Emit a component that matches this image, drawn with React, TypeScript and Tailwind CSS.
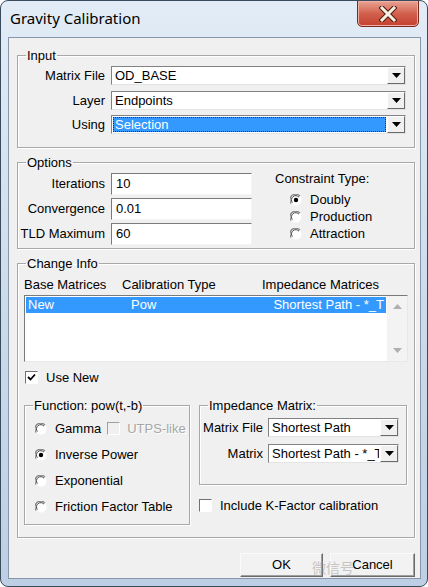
import React from "react";

const font = "font-['Liberation_Sans',Arial,sans-serif]";

function Arrow() {
  return (
    <svg width="9" height="5" viewBox="0 0 9 5">
      <path d="M0 0H9L4.5 5Z" fill="#000" />
    </svg>
  );
}

function DropButton() {
  return (
    <div className="flex w-[18px] shrink-0 items-center justify-center border border-t-white border-l-white border-r-[#696969] border-b-[#696969] bg-[#f0f0f0]">
      <Arrow />
    </div>
  );
}

function Combo({ value, w, selected }: { value: string; w: string; selected?: boolean }) {
  return (
    <div className={`flex h-[19px] ${w} border border-t-[#828282] border-l-[#828282] border-r-[#e3e3e3] border-b-[#e3e3e3] bg-white`}>
      <div className="flex min-w-0 flex-1 p-[1px]">
        <div
          className={
            selected
              ? "flex-1 overflow-hidden whitespace-nowrap bg-[#3399ff] px-[2px] leading-[15px] text-white outline-1 outline-dotted outline-[#1a2b55] -outline-offset-1"
              : "flex-1 overflow-hidden whitespace-nowrap px-[2px] leading-[15px] text-black"
          }
        >
          {value}
        </div>
      </div>
      <DropButton />
    </div>
  );
}

function Edit({ value }: { value: string }) {
  return (
    <div className="h-[22px] w-[141px] border border-t-[#7a7a7a] border-l-[#7a7a7a] border-r-[#f4f4f4] border-b-[#f4f4f4] bg-white px-[4px] leading-[20px]">
      {value}
    </div>
  );
}

function Radio({ checked }: { checked?: boolean }) {
  return (
    <svg width="12" height="12" viewBox="0 0 12 12" className="shrink-0">
      <circle cx="6" cy="6" r="5.5" fill="#fff" />
      <path d="M10 2.2A5.5 5.5 0 0 0 1.2 9.5" stroke="#808080" strokeWidth="1.2" fill="none" />
      <path d="M9 3.2A4.2 4.2 0 0 0 2.4 8.6" stroke="#404040" strokeWidth="1" fill="none" />
      {checked && <circle cx="6" cy="6" r="2.2" fill="#000" />}
    </svg>
  );
}

function Check({ checked, disabled }: { checked?: boolean; disabled?: boolean }) {
  return (
    <div
      className={`flex h-[13px] w-[13px] shrink-0 items-center justify-center border ${
        disabled ? "border-t-[#a0a0a0] border-l-[#a0a0a0]" : "border-t-[#707070] border-l-[#707070]"
      } border-r-white border-b-white ${disabled ? "bg-[#f0f0f0]" : "bg-white"}`}
    >
      {checked && (
        <svg width="9" height="9" viewBox="0 0 9 9">
          <path d="M1 4L3.5 6.5L8 1.5" stroke="#000" strokeWidth="1.8" fill="none" />
        </svg>
      )}
    </div>
  );
}

function Group({ title, className, children }: { title: string; className?: string; children: React.ReactNode }) {
  return (
    <fieldset
      className={`m-0 border border-[#a8a8a8] p-0 shadow-[inset_1px_1px_0_#fff,1px_1px_0_#fff] ${className ?? ""}`}
    >
      <legend className="ml-[8px] px-[1px] leading-[15px] text-black">{title}</legend>
      {children}
    </fieldset>
  );
}

function Button({ label, w }: { label: string; w: string }) {
  return (
    <div className={`flex h-[24px] ${w} items-center justify-center border border-t-[#fafafa] border-l-[#fafafa] border-r-[#6a6a6a] border-b-[#6a6a6a] bg-[#f2f2f2] shadow-[inset_-1px_-1px_0_#a0a0a0]`}>
      {label}
    </div>
  );
}

export default function App() {
  return (
    <div className={`${font} relative h-[587px] w-[428px] overflow-hidden rounded-[8px] border border-[#3b4b5e] bg-gradient-to-b from-[#e2ecf6] via-[#cddcec] to-[#bccfe4] text-[13px] text-black`}>
      {/* title bar */}
      <div className="flex h-[36px] items-center pl-[9px] pb-[2px]">
        <span className="font-['Noto_Sans',sans-serif] text-[15px] text-black">Gravity Calibration</span>
      </div>
      <div className="absolute right-[8px] top-[-1px] flex h-[27px] w-[62px] items-center justify-center rounded-b-[5px] border border-[#7a2a20] bg-gradient-to-b from-[#e8a495] via-[#d2604d] to-[#c4402f] shadow-[inset_0_0_0_1px_#f0b0a4]">
        <svg width="18" height="16" viewBox="0 0 18 16">
          <path d="M3 2L15 14M15 2L3 14" stroke="#4a1a14" strokeWidth="5" strokeLinecap="square" />
          <path d="M3 2L15 14M15 2L3 14" stroke="#f8efe0" strokeWidth="3" strokeLinecap="square" />
        </svg>
      </div>

      {/* client area */}
      <div className="relative ml-[7px] h-[542px] w-[413px] border border-[#8796a8] bg-[#f0f0f0] pl-[8px] pr-[5px] pt-[10px]">
        <Group title="Input" className="w-[398px]">
          <div className="flex flex-col gap-[5px] pb-[12px] pt-[3px]">
            {[
              ["Matrix File", "OD_BASE", false],
              ["Layer", "Endpoints", false],
              ["Using", "Selection", true],
            ].map(([l, v, s]) => (
              <div key={l as string} className="flex items-center">
                <div className="w-[87px] text-right">{l}</div>
                <div className="ml-[6px]">
                  <Combo value={v as string} w="w-[295px]" selected={s as boolean} />
                </div>
              </div>
            ))}
          </div>
        </Group>

        <Group title="Options" className="mt-[7px] w-[398px]">
          <div className="flex pb-[3px] pt-[3px]">
            <div className="flex flex-col gap-[3px]">
              {[
                ["Iterations", "10"],
                ["Convergence", "0.01"],
                ["TLD Maximum", "60"],
              ].map(([l, v]) => (
                <div key={l} className="flex items-center">
                  <div className="w-[87px] text-right">{l}</div>
                  <div className="ml-[6px]">
                    <Edit value={v} />
                  </div>
                </div>
              ))}
            </div>
            <div className="ml-[23px] -mt-[2px]">
              <div className="leading-[15px]">Constraint Type:</div>
              <div className="mt-[6px] flex flex-col pl-[15px]">
                {[
                  ["Doubly", true],
                  ["Production", false],
                  ["Attraction", false],
                ].map(([l, c]) => (
                  <div key={l as string} className="flex h-[17px] items-center gap-[8px]">
                    <Radio checked={c as boolean} />
                    <span>{l}</span>
                  </div>
                ))}
              </div>
            </div>
          </div>
        </Group>

        <Group title="Change Info" className="mt-[7px] w-[398px]">
          <div className="px-[6px] pb-[12px] pt-[6px]">
            <div className="flex leading-[15px]">
              <span className="w-[98px]">Base Matrices</span>
              <span className="w-[140px]">Calibration Type</span>
              <span>Impedance Matrices</span>
            </div>
            <div className="mt-[3px] flex h-[67px] w-[384px] border border-t-[#7a7a7a] border-l-[#7a7a7a] border-r-[#e8e8e8] border-b-[#e8e8e8] bg-white">
              <div className="flex-1 p-[1px]">
                <div className="flex h-[16px] items-center bg-[#3399ff] text-white">
                  <span className="w-[105px] pl-[2px]">New</span>
                  <span className="flex-1">Pow</span>
                  <span className="pr-[2px]">Shortest Path - *_T</span>
                </div>
              </div>
              <div className="flex w-[20px] flex-col items-center justify-between bg-[#f3f3f3] py-[8px]">
                <svg width="9" height="5" viewBox="0 0 9 5">
                  <path d="M0 5H9L4.5 0Z" fill="#b0b0b0" />
                </svg>
                <svg width="9" height="5" viewBox="0 0 9 5">
                  <path d="M0 0H9L4.5 5Z" fill="#b0b0b0" />
                </svg>
              </div>
            </div>
            <div className="mt-[9px] flex h-[14px] items-center gap-[8px] pl-[1px]">
              <Check checked />
              <span>Use New</span>
            </div>

            <div className="mt-[13px] flex gap-[9px]">
              <Group title="Function: pow(t,-b)" className="w-[166px] overflow-hidden">
                <div className="flex flex-col gap-[10px] pb-[9px] pl-[10px] pt-[8px]">
                  <div className="flex h-[16px] items-center">
                    <Radio />
                    <span className="ml-[8px]">Gamma</span>
                    <span className="ml-[6px]">
                      <Check disabled />
                    </span>
                    <span className="ml-[7px] whitespace-nowrap text-[#a6a6a6] [text-shadow:1px_1px_0_#fff]">UTPS-like</span>
                  </div>
                  {[
                    ["Inverse Power", true],
                    ["Exponential", false],
                    ["Friction Factor Table", false],
                  ].map(([l, c]) => (
                    <div key={l as string} className="flex h-[16px] items-center gap-[8px]">
                      <Radio checked={c as boolean} />
                      <span>{l}</span>
                    </div>
                  ))}
                </div>
              </Group>

              <div className="flex flex-col">
                <Group title="Impedance Matrix:" className="w-[208px]">
                  <div className="flex flex-col gap-[7px] pb-[20px] pt-[5px]">
                    {[
                      ["Matrix File", "Shortest Path"],
                      ["Matrix", "Shortest Path - *_T"],
                    ].map(([l, v]) => (
                      <div key={l} className="flex items-center">
                        <div className="w-[63px] text-right">{l}</div>
                        <div className="ml-[5px]">
                          <Combo value={v} w="w-[131px]" />
                        </div>
                      </div>
                    ))}
                  </div>
                </Group>
                <div className="mt-[14px] flex h-[14px] items-center gap-[8px]">
                  <Check />
                  <span>Include K-Factor calibration</span>
                </div>
              </div>
            </div>
          </div>
        </Group>

        <div className="mt-[15px] flex w-[398px] justify-end gap-[7px]">
          <Button label="OK" w="w-[83px]" />
          <Button label="Cancel" w="w-[85px]" />
        </div>

        <div className="pointer-events-none absolute left-[303px] top-[519px] font-['Noto_Sans_CJK_SC',sans-serif] text-[14px] text-[#9a9a9a] opacity-50">
          微信号
        </div>
      </div>
    </div>
  );
}
